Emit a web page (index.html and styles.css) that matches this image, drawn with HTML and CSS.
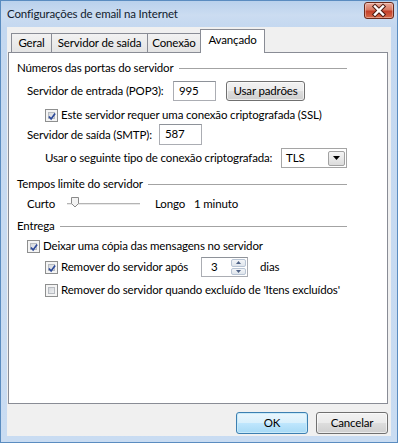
FILE: index.html
```html
<!DOCTYPE html>
<html lang="pt-BR">
<head>
    <meta charset="UTF-8">
    <title>Configurações de email na Internet</title>
    <link rel="stylesheet" href="styles.css">
</head>
<body>
    <div class="window">
        <!-- barra de título -->
        <div class="titlebar">
            <span class="title">Configurações de email na Internet</span>
            <span class="close">
                <svg width="30" height="17" viewBox="0 0 30 17">
                    <path d="M11 4.5 L19 12.5 M19 4.5 L11 12.5" stroke="#4a1a12" stroke-width="4.4" stroke-linecap="square" fill="none"/>
                    <path d="M11 4.5 L19 12.5 M19 4.5 L11 12.5" stroke="#ffffff" stroke-width="2.4" stroke-linecap="square" fill="none"/>
                </svg>
            </span>
        </div>

        <div class="client">
            <div class="tabs">
                <span class="tab t-geral">Geral</span>
                <span class="tab t-saida">Servidor de saída</span>
                <span class="tab t-conexao">Conexão</span>
                <span class="tab t-avancado active">Avançado</span>
            </div>

            <div class="panel">
                <!-- portas -->
                <div class="group g-portas">Números das portas do servidor</div>

                <div class="row r-pop">
                    <span class="lbl w-pop">Servidor de entrada (POP3):</span>
                    <span class="input w-port">995</span>
                    <span class="btn btn-small">Usar padrões</span>
                </div>

                <div class="row r-ssl">
                    <span class="cb checked"><svg width="9" height="9" viewBox="0 0 9 9"><path d="M1 4.5 L3.5 7.2 L8 1.2" stroke="#2d4a9a" stroke-width="1.9" fill="none"/></svg></span>
                    <span class="cb-lbl">Este servidor requer uma conexão criptografada (SSL)</span>
                </div>

                <div class="row r-smtp">
                    <span class="lbl w-smtp">Servidor de saída (SMTP):</span>
                    <span class="input w-port">587</span>
                </div>

                <div class="row r-tls">
                    <span class="lbl w-tls">Usar o seguinte tipo de conexão criptografada:</span>
                    <span class="select">
                        <span class="select-text">TLS</span>
                        <span class="select-btn"><svg width="7" height="4" viewBox="0 0 7 4"><path d="M0 0 H7 L3.5 4 Z" fill="#000"/></svg></span>
                    </span>
                </div>

                <!-- tempos -->
                <div class="group g-tempos">Tempos limite do servidor</div>

                <div class="row r-slider">
                    <span class="lbl w-curto">Curto</span>
                    <span class="slider">
                        <span class="track"></span>
                        <svg class="thumb" width="9" height="11" viewBox="0 0 9 11"><path d="M0.5 0.5 H7.5 V6.5 L4 10 L0.5 6.5 Z" fill="#f3f3f3" stroke="#8a8a8a"/></svg>
                    </span>
                    <span class="lbl w-longo">Longo</span>
                    <span class="lbl">1 minuto</span>
                </div>

                <!-- entrega -->
                <div class="group g-entrega">Entrega</div>

                <div class="row r-cb1">
                    <span class="cb checked"><svg width="9" height="9" viewBox="0 0 9 9"><path d="M1 4.5 L3.5 7.2 L8 1.2" stroke="#2d4a9a" stroke-width="1.9" fill="none"/></svg></span>
                    <span class="cb-lbl">Deixar uma cópia das mensagens no servidor</span>
                </div>

                <div class="row r-cb2">
                    <span class="cb checked"><svg width="9" height="9" viewBox="0 0 9 9"><path d="M1 4.5 L3.5 7.2 L8 1.2" stroke="#2d4a9a" stroke-width="1.9" fill="none"/></svg></span>
                    <span class="cb-lbl w-apos">Remover do servidor após</span>
                    <span class="spin">
                        <span class="spin-text">3</span>
                        <span class="spin-btns">
                            <span class="spin-btn"><svg width="5" height="3" viewBox="0 0 5 3"><path d="M0 3 H5 L2.5 0 Z" fill="#4d6185"/></svg></span>
                            <span class="spin-btn"><svg width="5" height="3" viewBox="0 0 5 3"><path d="M0 0 H5 L2.5 3 Z" fill="#4d6185"/></svg></span>
                        </span>
                    </span>
                    <span class="lbl dias">dias</span>
                </div>

                <div class="row r-cb3">
                    <span class="cb"></span>
                    <span class="cb-lbl">Remover do servidor quando excluído de 'Itens excluídos'</span>
                </div>
            </div>

            <div class="footer">
                <span class="btn btn-default">OK</span>
                <span class="btn">Cancelar</span>
            </div>
        </div>
    </div>
</body>
</html>
```

FILE: styles.css
```css
* {
    box-sizing: border-box;
}

body {
    margin: 0;
    font-family: Lato, "Noto Sans", sans-serif;
    font-size: 11.5px;
    letter-spacing: -0.15px;
    color: #000;
}

/* janela */
.window {
    width: 398px;
    height: 443px;
    border: 1px solid #5a8cc0;
    background: linear-gradient(180deg, #b9d1ec 0px, #cbdcf1 14px, #c4d8f0 26px, #c9dcf2 100%);
    display: flex;
    flex-direction: column;
}

.titlebar {
    height: 26px;
    display: flex;
    justify-content: space-between;
    padding: 0 3px 0 6px;
}

.title {
    line-height: 25px;
    color: #10202e;
}

.close {
    width: 30px;
    height: 17px;
    margin-top: 1px;
    border: 1px solid #6b2a1c;
    border-radius: 3px;
    background: linear-gradient(180deg, #e9a99a 0%, #d97a63 45%, #c3402a 55%, #d86a4a 100%);
    box-shadow: inset 0 0 0 1px rgba(255, 255, 255, 0.35);
    display: flex;
}

.close svg {
    margin: -1px;
}

.client {
    flex: 1;
    margin: 0 6px 6px 6px;
    padding: 2px 3px 0 1px;
    background: #f0f0f0;
    display: flex;
    flex-direction: column;
}

/* abas */
.tabs {
    height: 23px;
    display: flex;
    align-items: flex-end;
    padding-left: 3px;
}

.tab {
    height: 19px;
    border: 1px solid #898c95;
    border-bottom: none;
    background: linear-gradient(180deg, #f2f2f2, #e4e4e4);
    text-align: center;
    line-height: 17px;
    margin-left: -1px;
}

.t-geral {
    width: 41px;
    margin-left: 0;
}

.t-saida {
    width: 97px;
}

.t-conexao {
    width: 54px;
}

.t-avancado {
    width: 65px;
}

.tab.active {
    position: relative;
    z-index: 1;
    height: 24px;
    margin-bottom: -1px;
    background: #fff;
    line-height: 20px;
}

.panel {
    height: 352px;
    border: 1px solid #898c95;
    background: #fff;
    padding: 0 8px;
}

/* grupos */
.group {
    width: 330px;
    height: 16px;
    line-height: 16px;
    display: flex;
    align-items: center;
}

.group::after {
    content: "";
    flex: 1;
    margin-left: 5px;
    border-top: 1px solid #a3a3a3;
}

.g-portas {
    margin-top: 7px;
}

.g-tempos {
    margin-top: 8px;
}

.g-entrega {
    margin-top: 6px;
}

.row {
    display: flex;
    align-items: center;
    line-height: 16px;
}

.lbl {
    white-space: nowrap;
}

.r-pop {
    height: 20px;
    margin-top: 5px;
    padding-left: 10px;
}

.w-pop {
    width: 146px;
}

.r-ssl {
    height: 16px;
    margin-top: 6px;
    padding-left: 28px;
}

.r-smtp {
    height: 21px;
    margin-top: 1px;
    padding-left: 10px;
}

.w-smtp {
    width: 132px;
}

.r-tls {
    height: 20px;
    margin-top: 3px;
    padding-left: 28px;
}

.w-tls {
    width: 236px;
}

.r-slider {
    height: 16px;
    margin-top: 4px;
    padding-left: 10px;
}

.w-curto {
    width: 40px;
}

.w-longo {
    width: 39px;
}

.r-cb1 {
    height: 16px;
    margin-top: 4px;
    padding-left: 10px;
}

.r-cb2 {
    height: 20px;
    margin-top: 3px;
    padding-left: 28px;
}

.r-cb3 {
    height: 16px;
    margin-top: 5px;
    padding-left: 28px;
}

/* controles */
.input {
    height: 100%;
    border: 1px solid #abadb3;
    border-top-color: #8e9299;
    background: #fff;
    padding-left: 5px;
    line-height: 18px;
}

.w-port {
    width: 43px;
}

.btn {
    width: 72px;
    height: 22px;
    border: 1px solid #707070;
    border-radius: 3px;
    background: linear-gradient(180deg, #f2f2f2 0%, #ebebeb 48%, #dddddd 52%, #cfcfcf 100%);
    box-shadow: inset 0 0 0 1px rgba(255, 255, 255, 0.6);
    text-align: center;
    line-height: 20px;
}

.btn-small {
    width: 79px;
    height: 20px;
    margin-left: 10px;
    line-height: 18px;
}

.btn-default {
    border-color: #3c7fb1;
    background: linear-gradient(180deg, #eaf6fd 0%, #d9f0fc 48%, #bee6fd 52%, #a7d9f5 100%);
    box-shadow: inset 0 0 0 1px #c8eaf9;
}

.cb {
    width: 13px;
    height: 13px;
    flex: none;
    border: 1px solid #8e8f8f;
    padding: 1px;
    display: flex;
    background: linear-gradient(135deg, #cbcfd5, #f7f7f7) content-box, #f4f4f4;
    box-shadow: inset 0 0 0 2px #f4f4f4, inset 0 0 0 3px #b7bbc1;
}

.cb svg {
    margin: 1px 0 0 1px;
}

.cb-lbl {
    margin-left: 3px;
    white-space: nowrap;
}

.w-apos {
    width: 140px;
}

.select {
    width: 66px;
    height: 100%;
    border: 1px solid #a5a5a5;
    background: #fff;
    display: flex;
    align-items: center;
    padding: 0 1px 0 4px;
}

.select-text {
    flex: 1;
}

.select-btn {
    width: 17px;
    height: 15px;
    border: 1px solid #a2a2a2;
    border-radius: 2px;
    background: linear-gradient(180deg, #f5f5f5, #dcdcdc);
    display: flex;
    align-items: center;
    justify-content: center;
}

.slider {
    width: 73px;
    height: 16px;
    margin-right: 15px;
    display: flex;
    align-items: center;
    position: relative;
}

.track {
    flex: 1;
    height: 2px;
    border-top: 1px solid #b4b4b4;
    border-bottom: 1px solid #e8e8e8;
}

.thumb {
    position: absolute;
    left: 4px;
    top: 1px;
}

.spin {
    width: 47px;
    height: 100%;
    border: 1px solid #abadb3;
    border-top-color: #8e9299;
    background: #fff;
    display: flex;
    padding: 1px;
}

.spin-text {
    flex: 1;
    padding-left: 8px;
    line-height: 16px;
}

.spin-btns {
    width: 15px;
    display: flex;
    flex-direction: column;
    gap: 1px;
}

.spin-btn {
    flex: 1;
    border: 1px solid #b8c4d4;
    border-radius: 2px;
    background: linear-gradient(180deg, #f3f5f8, #dfe5ec);
    display: flex;
    align-items: center;
    justify-content: center;
}

.dias {
    margin-left: 12px;
}

/* rodapé */
.footer {
    display: flex;
    justify-content: flex-end;
    gap: 8px;
    padding-top: 8px;
}
```
